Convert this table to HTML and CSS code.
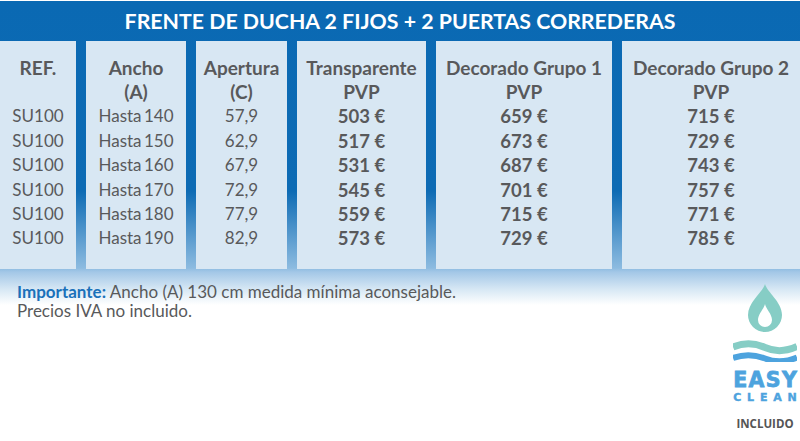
FILE: index.html
```html
<!DOCTYPE html>
<html lang="es">
<head>
<meta charset="utf-8">
<title>Frente de ducha 2 fijos + 2 puertas correderas</title>
<link rel="stylesheet" href="styles.css">
</head>
<body>
<div class="sheet">
  <h1 class="title">FRENTE DE DUCHA 2 FIJOS + 2 PUERTAS CORREDERAS</h1>
  <div class="table">
    <div class="col">
      <div class="head">REF.<br>&nbsp;</div>
      <div>SU100</div><div>SU100</div><div>SU100</div><div>SU100</div><div>SU100</div><div>SU100</div>
    </div>
    <div class="col tight">
      <div class="head">Ancho<br>(A)</div>
      <div>Hasta 140</div><div>Hasta 150</div><div>Hasta 160</div><div>Hasta 170</div><div>Hasta 180</div><div>Hasta 190</div>
    </div>
    <div class="col">
      <div class="head">Apertura<br>(C)</div>
      <div>57,9</div><div>62,9</div><div>67,9</div><div>72,9</div><div>77,9</div><div>82,9</div>
    </div>
    <div class="col price">
      <div class="head">Transparente<br>PVP</div>
      <div>503 €</div><div>517 €</div><div>531 €</div><div>545 €</div><div>559 €</div><div>573 €</div>
    </div>
    <div class="col price">
      <div class="head">Decorado Grupo 1<br>PVP</div>
      <div>659 €</div><div>673 €</div><div>687 €</div><div>701 €</div><div>715 €</div><div>729 €</div>
    </div>
    <div class="col price">
      <div class="head">Decorado Grupo 2<br>PVP</div>
      <div>715 €</div><div>729 €</div><div>743 €</div><div>757 €</div><div>771 €</div><div>785 €</div>
    </div>
  </div>
  <div class="footer">
    <p class="note"><span class="imp">Importante:</span> Ancho (A) 130 cm medida mínima aconsejable.<br>Precios IVA no incluido.</p>
    <div class="badge">
      <svg class="badge-icon" width="64" height="78" viewBox="0 0 64 78" aria-hidden="true">
        <path fill="#86cdc5" fill-rule="evenodd" d="M32,0 C30,8 15,18 15,31 A17,17 0 0,0 49,31 C49,18 34,8 32,0 Z M32,20 C31,25 25,30 25,36 A7,7 0 0,0 39,36 C39,30 33,25 32,20 Z"/>
        <path fill="none" stroke="#86cdc5" stroke-width="7" d="M0,63 C12,58 22,59 32,63.5 C42,68 52,68 64,62.5"/>
        <path fill="none" stroke="#4da3de" stroke-width="6" d="M0,74 C12,69.5 22,70.5 32,74.5 C42,78.5 52,78.5 64,73.5"/>
      </svg>
      <div class="easy"><span class="sp-easy">EAS</span>Y</div>
      <div class="clean"><span class="sp-clean">CLEA</span>N</div>
      <div class="incl">INCLUIDO</div>
    </div>
  </div>
</div>
</body>
</html>
```

FILE: styles.css
```css
html, body {
  margin: 0;
  padding: 0;
  background: #ffffff;
}

body {
  width: 800px;
  height: 441px;
  overflow: hidden;
  font-family: "Lato", "Open Sans", sans-serif;
  color: #58595b;
}

.sheet {
  margin-top: 1px;
  height: 440px;
  display: flex;
  flex-direction: column;
  background: linear-gradient(to bottom,
    #0a69b3 0px,
    #0d6bb4 190px,
    #8cbbe0 267px,
    #a3c7e7 271px,
    #d6e7f4 288px,
    #ffffff 304px);
}

.title {
  margin: 0;
  height: 40px;
  line-height: 40px;
  text-align: center;
  color: #ffffff;
  font-size: 21.3px;
  font-weight: 700;
}

.table {
  display: grid;
  grid-template-columns: 76px 100px 91px 129px 176px 1fr;
  column-gap: 10px;
  height: 228px;
}

.col {
  background: #d8e7f3;
  padding-top: 14.5px;
  text-align: center;
  font-size: 17px;
  line-height: 24.4px;
  white-space: nowrap;
}

.tight {
  word-spacing: -2px;
}

.head {
  font-size: 19px;
  font-weight: 700;
  word-spacing: 0;
}

.price {
  font-size: 18.5px;
  font-weight: 700;
}

.footer {
  flex: 1;
  display: flex;
  justify-content: space-between;
  align-items: flex-start;
}

.note {
  margin: 12.5px 0 0 17px;
  font-size: 17px;
  line-height: 19.5px;
}

.imp {
  color: #1a71ba;
  font-weight: 700;
}

.badge {
  width: 64px;
  margin: 15px 3px 0 0;
  display: flex;
  flex-direction: column;
  align-items: center;
  font-family: "DejaVu Sans", "Liberation Sans", sans-serif;
  font-weight: 700;
}

.badge-icon {
  display: block;
}

.easy {
  margin-top: 10px;
  color: #4da3de;
  font-size: 20.5px;
  line-height: 17px;
  white-space: nowrap;
  -webkit-text-stroke: 0.8px #4da3de;
}

.sp-easy {
  letter-spacing: 1.4px;
}

.clean {
  margin-top: 3px;
  color: #4da3de;
  font-size: 11px;
  line-height: 11px;
  white-space: nowrap;
  -webkit-text-stroke: 0.4px #4da3de;
}

.sp-clean {
  letter-spacing: 5.8px;
}

.incl {
  margin-top: 15px;
  color: #555555;
  font-family: "Open Sans", "Lato", sans-serif;
  font-size: 11.5px;
  line-height: 12px;
}
```
